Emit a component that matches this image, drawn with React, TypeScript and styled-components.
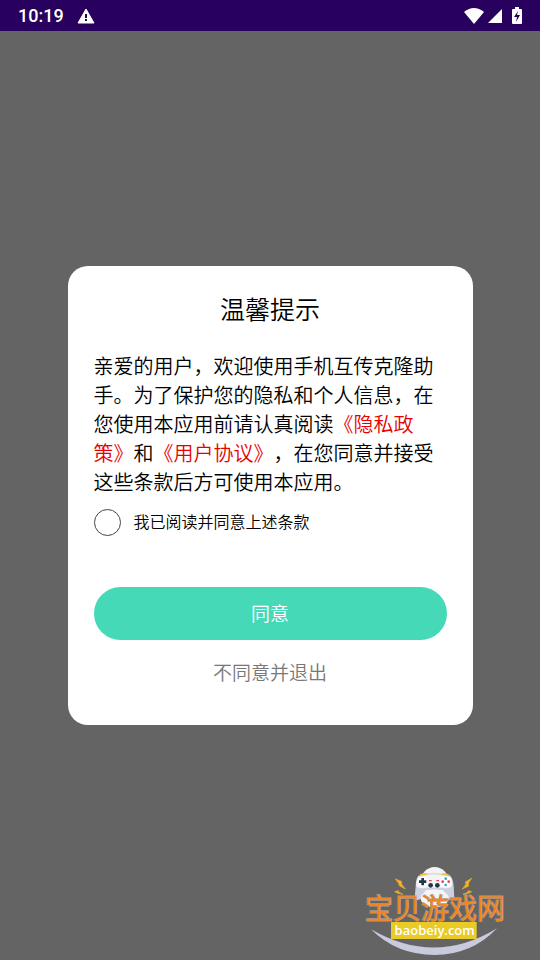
import React, { useState } from "react";
import styled, { createGlobalStyle } from "styled-components";

const GlobalStyle = createGlobalStyle`
  * { box-sizing: border-box; }
  body {
    margin: 0;
    background: #646464;
    font-family: "Noto Sans CJK SC", sans-serif;
    font-weight: 350;
    color: #000;
  }
`;

const Screen = styled.div`
  position: relative;
  display: flex;
  flex-direction: column;
  min-height: 100vh;
`;

const StatusBar = styled.header`
  display: flex;
  align-items: center;
  height: 31px;
  padding: 0 18px;
  background: #28005d;
  color: #fff;
`;

const Clock = styled.time`
  font: 500 18px/32px Roboto, sans-serif;
  margin-right: 13px;
`;

const StatusIcons = styled.div`
  display: flex;
  align-items: center;
  gap: 4px;
  margin-left: auto;
`;

const BatteryIcon = styled.svg`
  margin-left: 6px;
`;

const Main = styled.main`
  flex: 1;
  display: flex;
  align-items: center;
  justify-content: center;
`;

const Dialog = styled.section`
  display: flex;
  flex-direction: column;
  width: 75%;
  padding: 24px 26px 38px;
  border-radius: 20px;
  background: #fff;
`;

const Title = styled.h1`
  margin: 0 0 25px;
  font-size: 25px;
  line-height: 36px;
  font-weight: inherit;
  text-align: center;
`;

const Message = styled.p`
  margin: 0;
  font-size: 20px;
  line-height: 29px;
  text-spacing-trim: space-all;
`;

const PolicyLink = styled.a`
  color: #e60000;
  text-decoration: none;
`;

const Consent = styled.label`
  display: flex;
  align-items: flex-start;
  gap: 13px;
  margin-top: 13px;
  font-size: 16px;
  line-height: 25px;
`;

const RoundCheck = styled.input`
  appearance: none;
  width: 27px;
  height: 27px;
  margin: 0;
  border: 1px solid #444;
  border-radius: 50%;
  &:checked {
    background: #45d9b8;
  }
`;

const Button = styled.button<{ $primary?: boolean }>`
  margin: ${(p) => (p.$primary ? "51px 0 0" : "19px 0 0")};
  padding: 0 0 2px;
  height: ${(p) => (p.$primary ? "53px" : "28px")};
  border: 0;
  border-radius: 27px;
  background: ${(p) => (p.$primary ? "#45d9b8" : "transparent")};
  color: ${(p) => (p.$primary ? "#fff" : "#787878")};
  font-family: inherit;
  font-size: 19px;
  font-weight: inherit;
  line-height: 26px;
`;

const Watermark = styled.svg`
  position: absolute;
  right: 25px;
  bottom: 0;
  pointer-events: none;
`;

function SiteLogo() {
  return (
    <Watermark width="160" height="105" viewBox="0 0 480 315" role="img" aria-label="宝贝游戏网">
      <path d="M48 223Q240 334 426 220Q350 300 239 300Q125 300 48 223Z" fill="#c9cbdc" />
      <ellipse cx="239" cy="83" rx="43" ry="47" fill="#f3f3f4" />
      <path d="M190 62Q238 48 286 62Q294 70 296 94L298 130Q288 141 277 129L264 105H212L200 129Q188 141 179 130L182 94Q183 70 190 62Z" fill="#ccd0df" />
      <path d="M190 65Q238 50 286 65Q294 78 291 94Q280 103 264 98H213Q195 103 184 94Q182 78 190 65Z" fill="#f4f4f7" />
      <ellipse cx="239" cy="130" rx="42" ry="27" fill="#f5f5f5" />
      <path d="M195 61Q204 56 216 58M261 58Q275 56 283 62" stroke="#efbd4c" strokeWidth="5" fill="none" />
      <circle cx="203" cy="80" r="15" fill="#fff" />
      <path d="M203 69V91M192 80H214" stroke="#203746" strokeWidth="8" />
      <circle cx="272" cy="80" r="17" fill="#fff" />
      <circle cx="272" cy="71" r="4" fill="#36a9c1" />
      <circle cx="272" cy="90" r="4" fill="#36a9c1" />
      <circle cx="263" cy="80" r="4" fill="#e14459" />
      <circle cx="281" cy="80" r="4" fill="#e14459" />
      <path d="M222 77H230M244 77H252" stroke="#e14459" strokeWidth="4" />
      <circle cx="227" cy="91" r="7" fill="#203746" />
      <circle cx="247" cy="91" r="7" fill="#203746" />
      <g fill="#f1b62d" stroke="#dca02b" strokeWidth="3">
        <path d="M121 72L139 79L140 88L151 102L133 92L131 85Z" />
        <path d="M350 70L331 81L333 88L322 102L341 93L340 85Z" />
        <path d="M119 110L130 107L132 112L144 118L129 115Z" />
        <path d="M350 110L340 107L338 112L324 118L341 115Z" />
      </g>
      <text x="240" y="191" textAnchor="middle" fontFamily="'Noto Sans CJK SC', sans-serif" fontSize="84" fontWeight="350" fill="#f5841a" stroke="#b09a86" strokeWidth="4" paintOrder="stroke">
        宝贝游戏网
      </text>
      <rect x="108" y="201" width="257" height="51" fill="#e8cb28" />
      <text x="239" y="239" textAnchor="middle" fontFamily="'Open Sans', sans-serif" fontSize="39" fontWeight="600" fill="#fff">
        baobeiy.com
      </text>
    </Watermark>
  );
}

export default function App() {
  const [agreed, setAgreed] = useState(false);
  return (
    <Screen lang="zh-CN">
      <GlobalStyle />
      <StatusBar>
        <Clock>10:19</Clock>
        <svg width="18" height="16" viewBox="0 0 18 16" aria-hidden="true">
          <path d="M9 1L17 15H1Z" fill="#fff" stroke="#fff" strokeLinejoin="round" />
          <path d="M9 6V10M9 11V13" stroke="#28005d" strokeWidth="2" />
        </svg>
        <StatusIcons>
          <svg width="20" height="16" viewBox="0 0 20 16" aria-hidden="true">
            <path d="M0 4Q10 -4 20 4L10 16Z" fill="#fff" />
          </svg>
          <svg width="14" height="14" viewBox="0 0 14 14" aria-hidden="true">
            <path d="M14 0V14H0Z" fill="#fff" />
          </svg>
          <BatteryIcon width="10" height="17" viewBox="0 0 10 17" aria-hidden="true">
            <path d="M3 0H7V2H9Q10 2 10 3V16Q10 17 9 17H1Q0 17 0 16V3Q0 2 1 2H3Z" fill="#fff" />
            <path d="M6 4L2 10H5L4 15L8 8H5Z" fill="#28005d" />
          </BatteryIcon>
        </StatusIcons>
      </StatusBar>
      <Main>
        <Dialog role="dialog" aria-labelledby="notice-title">
          <Title id="notice-title">温馨提示</Title>
          <Message>
            亲爱的用户，欢迎使用手机互传克隆助手。为了保护您的隐私和个人信息，在您使用本应用前请认真阅读
            <PolicyLink href="#privacy">《隐私政策》</PolicyLink>和<PolicyLink href="#terms">《用户协议》</PolicyLink>
            ，在您同意并接受这些条款后方可使用本应用。
          </Message>
          <Consent>
            <RoundCheck type="checkbox" checked={agreed} onChange={(e) => setAgreed(e.target.checked)} />
            我已阅读并同意上述条款
          </Consent>
          <Button type="button" $primary>同意</Button>
          <Button type="button">不同意并退出</Button>
        </Dialog>
      </Main>
      <SiteLogo />
    </Screen>
  );
}
